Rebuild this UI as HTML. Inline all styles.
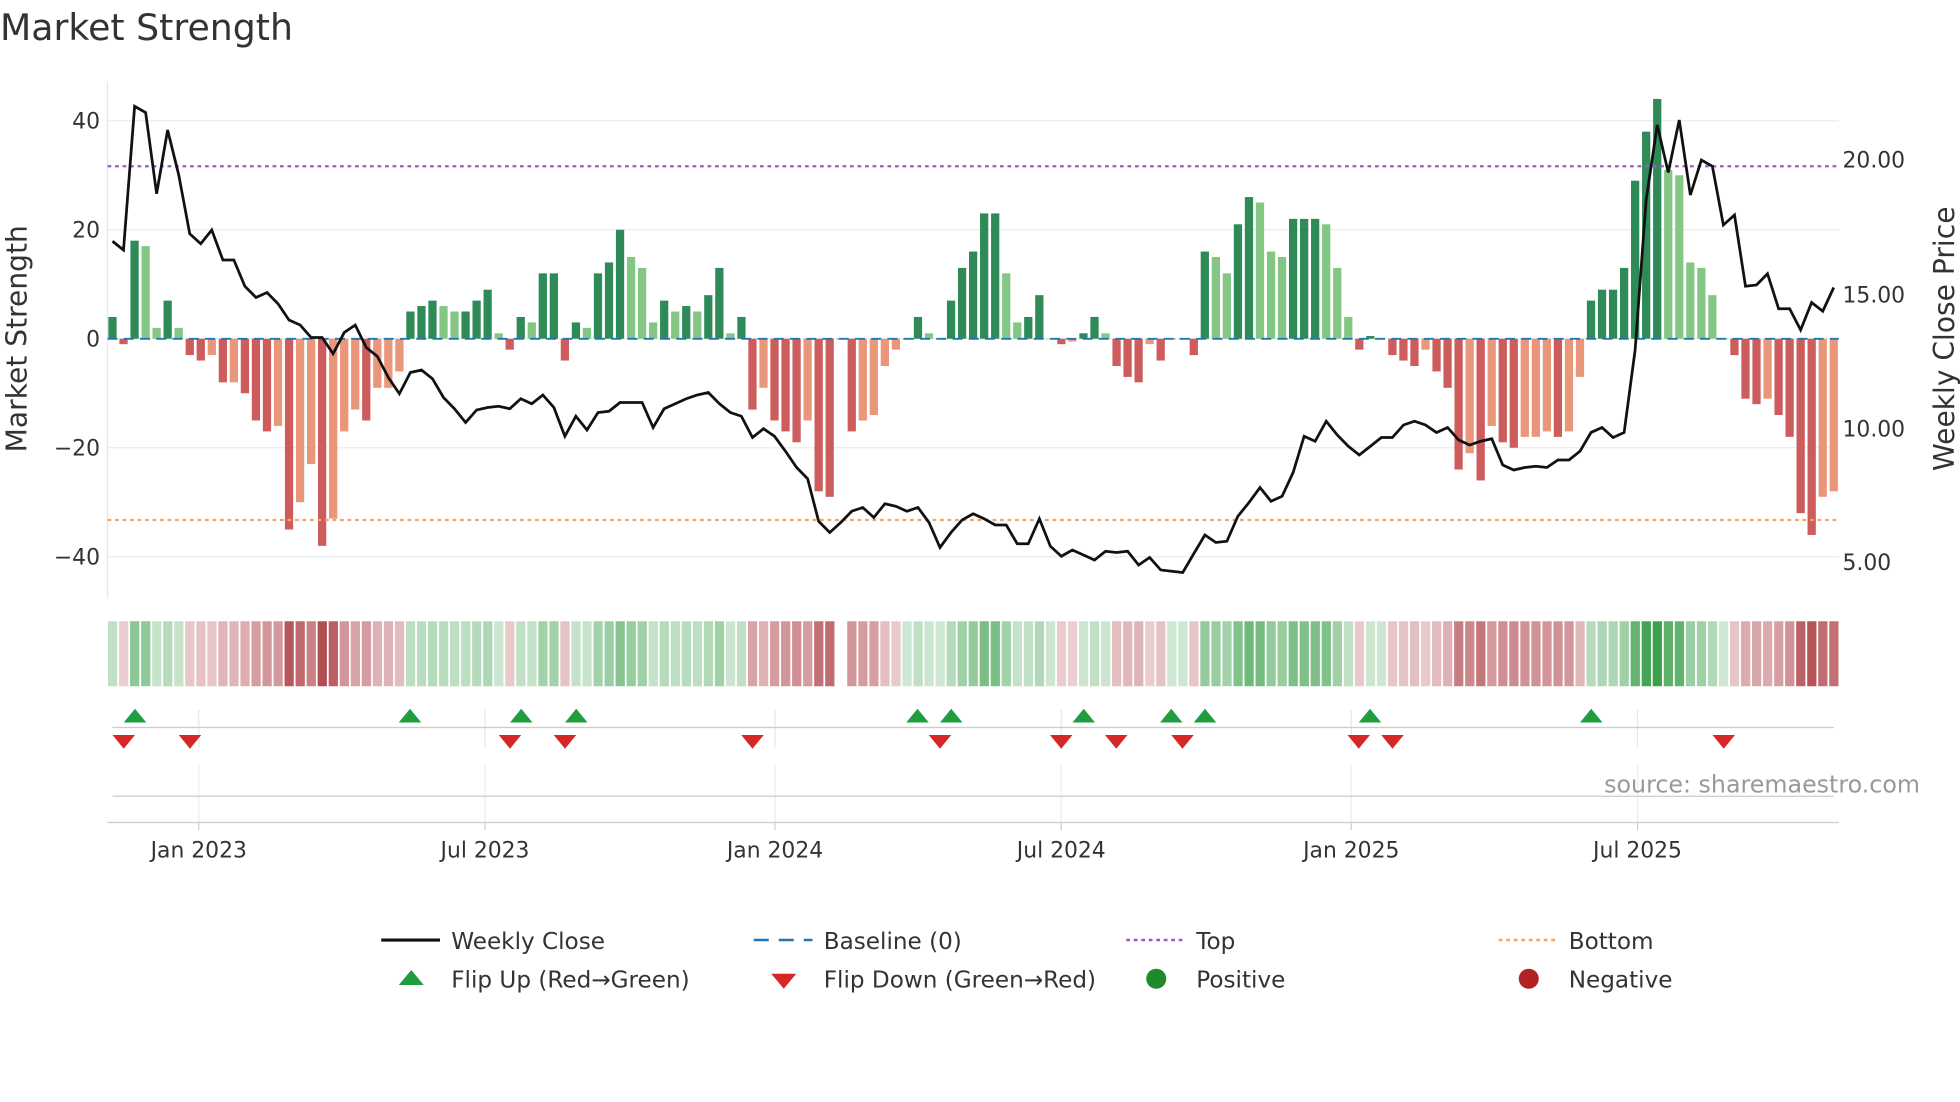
<!DOCTYPE html>
<html><head><meta charset="utf-8"><style>
html,body{margin:0;padding:0;background:#fff;width:1960px;height:1102px;overflow:hidden}
svg{display:block}
text{font-family:"DejaVu Sans","Liberation Sans",sans-serif;fill:#333}
</style></head><body>
<svg id="s" width="1960" height="1102" viewBox="0 0 1568 881.6" xmlns="http://www.w3.org/2000/svg">
<text x="0" y="32" font-size="29" fill="#333">Market Strength</text>
<g id="g"></g>
</svg>
<script>
const V=[4,-1,18,17,2,7,2,-3,-4,-3,-8,-8,-10,-15,-17,-16,-35,-30,-23,-38,-33,-17,-13,-15,-9,-9,-6,5,6,7,6,5,5,7,9,1,-2,4,3,12,12,-4,3,2,12,14,20,15,13,3,7,5,6,5,8,13,1,4,-13,-9,-15,-17,-19,-15,-28,-29,0,-17,-15,-14,-5,-2,0,4,1,0,7,13,16,23,23,12,3,4,8,0,-1,-0.5,1,4,1,-5,-7,-8,-1,-4,0,0,-3,16,15,12,21,26,25,16,15,22,22,22,21,13,4,-2,0.5,0,-3,-4,-5,-2,-6,-9,-24,-21,-26,-16,-19,-20,-18,-18,-17,-18,-17,-7,7,9,9,13,29,38,44,31,30,14,13,8,0,-3,-11,-12,-11,-14,-18,-32,-36,-29,-28];
const L=[193,200,85,90,155,104,140,187,195,184,208,208,229,238,234,243,256,260,270,270,283,266,260,278,285,302,315,298,296,303,318,327,338,328,326,325,327,319,323,316,326,349,333,344,330,329,322,322,322,342,327,323,319,316,314,323,330,333,350,343,349,361,374,383,417,426,418,409,406,414,403,405,409,406,418,438,426,416,411,415,420,420,435,435,415,437,445,440,444,448,441,442,441,452,446,456,457,458,443,428,434,433,413,402,390,401,397,378,349,353,337,348,357,364,357,350,350,340,337,340,346,342,352,356,353,351,372,376,374,373,374,368,368,361,346,342,350,346,280,160,100,138,96,156,128,133,180,172,229,228,219,247,247,264,242,249,230];
const n=V.length, x0=90, dx=(1467-90)/(n-1);
const Y=v=>271-v*4.36;
let h='';
for(const v of [40,20,0,-20,-40]){h+=`<line x1="86" x2="1471" y1="${Y(v)}" y2="${Y(v)}" stroke="#ebebeb" stroke-width="1"/>`;
 h+=`<text x="80" y="${Y(v)+6}" font-size="17.5" text-anchor="end">${v<0?'\u2212'+(-v):v}</text>`;}
h+=`<line x1="86" x2="86" y1="65" y2="478" stroke="#e6e6e6"/>`;
[[20,128],[15,236],[10,343],[5,450]].forEach(([p,y])=>h+=`<text x="1474" y="${y+6}" font-size="17.5">${p.toFixed(2)}</text>`);
h+=`<text transform="translate(21,271) rotate(-90)" font-size="22.5" text-anchor="middle">Market Strength</text>`;
h+=`<text transform="translate(1563,271) rotate(-90)" font-size="22.5" text-anchor="middle">Weekly Close Price</text>`;
for(let i=0;i<n;i++){const v=V[i],p=i?V[i-1]:0,x=x0+i*dx;let c;
 if(v>=0)c=v>=p?'#2e8b57':'#84c784';else c=v<p?'#cd5c5c':'#e9967a';
 const y=Math.min(Y(v),271),hh=Math.abs(v*4.36);
 h+=`<rect x="${x-3.3}" y="${y}" width="6.6" height="${Math.max(hh,0.5)}" fill="${c}"/>`;
 const a=Math.min(Math.abs(v)/40,1);let col;
 if(v>=0){const t=0.25+0.75*a;col=`rgb(${Math.round(255-t*(255-60))},${Math.round(255-t*(255-160))},${Math.round(255-t*(255-75))})`;}
 else{const t=0.25+0.75*a;col=`rgb(${Math.round(255-t*(255-175))},${Math.round(255-t*(255-70))},${Math.round(255-t*(255-75))})`;}
 if(v!==0||i!=66)h+=`<rect x="${x-3.6}" y="497" width="7.4" height="52" fill="${col}"/>`;
}
h+=`<line x1="86" x2="1471" y1="271" y2="271" stroke="#1f77b4" stroke-width="1.5" stroke-dasharray="8,5"/>`;
h+=`<line x1="86" x2="1471" y1="133" y2="133" stroke="#9b59d0" stroke-width="1.8" stroke-dasharray="3,3"/>`;
h+=`<line x1="86" x2="1471" y1="416" y2="416" stroke="#f4a460" stroke-width="1.8" stroke-dasharray="3,3"/>`;
h+=`<polyline fill="none" stroke="#111" stroke-width="2.2" points="${L.map((y,i)=>(x0+i*dx).toFixed(1)+','+y).join(' ')}"/>`;
const D=[[159,'Jan 2023'],[388,'Jul 2023'],[620,'Jan 2024'],[849,'Jul 2024'],[1081,'Jan 2025'],[1310,'Jul 2025']];
D.forEach(([x,t])=>{h+=`<line x1="${x}" x2="${x}" y1="568" y2="598" stroke="#e6e6e6"/><line x1="${x}" x2="${x}" y1="612" y2="658" stroke="#eee"/><line x1="${x}" x2="${x}" y1="658" y2="664" stroke="#ccc"/><text x="${x}" y="686" font-size="17.5" text-anchor="middle">${t}</text>`;});
h+=`<line x1="90" x2="1467" y1="582" y2="582" stroke="#ccc"/><line x1="90" x2="1467" y1="637" y2="637" stroke="#ccc"/><line x1="86" x2="1471" y1="658" y2="658" stroke="#ccc"/>`;
[108,328,417,461,734,761,867,937,964,1096,1273].forEach(x=>h+=`<polygon points="${x-9},578 ${x+9},578 ${x},567" fill="#1f9d3f"/>`);
[99,152,408,452,602,752,849,893,946,1087,1114,1379].forEach(x=>h+=`<polygon points="${x-9},588 ${x+9},588 ${x},599" fill="#d62728"/>`);
h+=`<text x="1536" y="634" font-size="19" text-anchor="end" style="fill:#999">source: sharemaestro.com</text>`;
const lg=(x,y,sym,t)=>{h+=sym+`<text x="${x+56}" y="${y+7}" font-size="18.5">${t}</text>`;};
lg(305,752,`<line x1="305" x2="352" y1="752" y2="752" stroke="#111" stroke-width="2.5"/>`,'Weekly Close');
lg(603,752,`<line x1="603" x2="650" y1="752" y2="752" stroke="#1f77b4" stroke-width="2" stroke-dasharray="12,8"/>`,'Baseline (0)');
lg(901,752,`<line x1="901" x2="946" y1="752" y2="752" stroke="#9b59d0" stroke-width="2" stroke-dasharray="3,3"/>`,'Top');
lg(1199,752,`<line x1="1199" x2="1244" y1="752" y2="752" stroke="#f4a460" stroke-width="2" stroke-dasharray="3,3"/>`,'Bottom');
lg(305,783,`<polygon points="319,788 339,788 329,776" fill="#1f9d3f"/>`,'Flip Up (Red\u2192Green)');
lg(603,783,`<polygon points="617,779 637,779 627,791" fill="#d62728"/>`,'Flip Down (Green\u2192Red)');
lg(901,783,`<circle cx="925" cy="783" r="8" fill="#1f8a2a"/>`,'Positive');
lg(1199,783,`<circle cx="1223" cy="783" r="8" fill="#b22222"/>`,'Negative');
document.getElementById('g').innerHTML=h;
</script>
</body></html>
